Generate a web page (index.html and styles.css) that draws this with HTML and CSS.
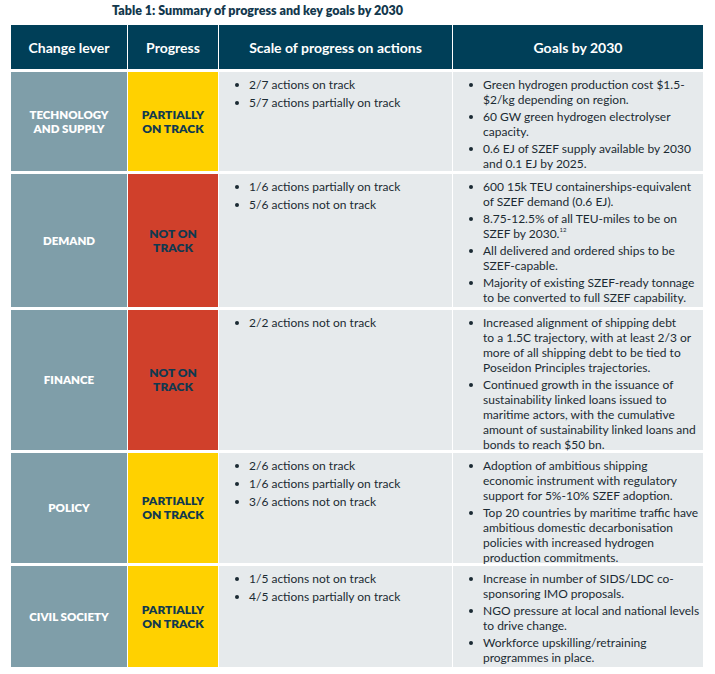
FILE: index.html
```html
<!DOCTYPE html>
<html lang="en">
<head>
<meta charset="utf-8">
<title>Table 1: Summary of progress and key goals by 2030</title>
<link rel="stylesheet" href="styles.css">
</head>
<body>
<div class="page">
  <h1 class="title">Table 1: Summary of progress and key goals by 2030</h1>
  <div class="table">
    <div class="th">Change lever</div>
    <div class="th">Progress</div>
    <div class="th">Scale of progress on actions</div>
    <div class="th">Goals by 2030</div>

    <div class="lever">TECHNOLOGY<br>AND SUPPLY</div>
    <div class="status partial">PARTIALLY<br>ON TRACK</div>
    <div class="cell"><ul class="list actions"><li>2/7 actions on track</li><li>5/7 actions partially on track</li></ul></div>
    <div class="cell"><ul class="list goals"><li>Green hydrogen production cost $1.5-<br>$2/kg depending on region.</li><li>60 GW green hydrogen electrolyser<br>capacity.</li><li>0.6 EJ of SZEF supply available by 2030<br>and 0.1 EJ by 2025.</li></ul></div>

    <div class="lever">DEMAND</div>
    <div class="status notrack">NOT ON<br>TRACK</div>
    <div class="cell"><ul class="list actions"><li>1/6 actions partially on track</li><li>5/6 actions not on track</li></ul></div>
    <div class="cell"><ul class="list goals"><li>600 15k TEU containerships-equivalent<br>of SZEF demand (0.6 EJ).</li><li>8.75-12.5% of all TEU-miles to be on<br>SZEF by 2030.<sup>12</sup></li><li>All delivered and ordered ships to be<br>SZEF-capable.</li><li>Majority of existing SZEF-ready tonnage<br>to be converted to full SZEF capability.</li></ul></div>

    <div class="lever">FINANCE</div>
    <div class="status notrack">NOT ON<br>TRACK</div>
    <div class="cell"><ul class="list actions"><li>2/2 actions not on track</li></ul></div>
    <div class="cell"><ul class="list goals"><li>Increased alignment of shipping debt<br>to a 1.5C trajectory, with at least 2/3 or<br>more of all shipping debt to be tied to<br>Poseidon Principles trajectories.</li><li>Continued growth in the issuance of<br>sustainability linked loans issued to<br>maritime actors, with the cumulative<br>amount of sustainability linked loans and<br>bonds to reach $50 bn.</li></ul></div>

    <div class="lever">POLICY</div>
    <div class="status partial">PARTIALLY<br>ON TRACK</div>
    <div class="cell"><ul class="list actions"><li>2/6 actions on track</li><li>1/6 actions partially on track</li><li>3/6 actions not on track</li></ul></div>
    <div class="cell"><ul class="list goals"><li>Adoption of ambitious shipping<br>economic instrument with regulatory<br>support for 5%-10% SZEF adoption.</li><li>Top 20 countries by maritime traffic have<br>ambitious domestic decarbonisation<br>policies with increased hydrogen<br>production commitments.</li></ul></div>

    <div class="lever">CIVIL SOCIETY</div>
    <div class="status partial">PARTIALLY<br>ON TRACK</div>
    <div class="cell"><ul class="list actions"><li>1/5 actions not on track</li><li>4/5 actions partially on track</li></ul></div>
    <div class="cell"><ul class="list goals"><li>Increase in number of SIDS/LDC co-<br>sponsoring IMO proposals.</li><li>NGO pressure at local and national levels<br>to drive change.</li><li>Workforce upskilling/retraining<br>programmes in place.</li></ul></div>
  </div>
</div>
</body>
</html>
```

FILE: styles.css
```css
html, body {
  margin: 0;
  padding: 0;
  background: #ffffff;
}

body {
  font-family: "Lato", "Open Sans", "Liberation Sans", sans-serif;
  color: #1b2a33;
}

.page {
  padding: 3px 12px 0 11px;
}

.title {
  margin: 0 0 7px 101px;
  font-size: 12.5px;
  line-height: 15px;
  font-weight: 800;
  color: #13384d;
}

.table {
  display: grid;
  grid-template-columns: 116px 90px 233px 250px;
  grid-template-rows: 44px 99px 133px 140px 110px 101px;
  column-gap: 1px;
  row-gap: 3px;
  width: 692px;
}

.th {
  background: #003f58;
  color: #ffffff;
  font-size: 14px;
  font-weight: 700;
  display: flex;
  align-items: center;
  justify-content: center;
  text-align: center;
}

.lever {
  background: #7f9ea9;
  color: #ffffff;
  font-size: 11.5px;
  font-weight: 800;
  line-height: 14px;
  display: flex;
  align-items: center;
  justify-content: center;
  text-align: center;
}

.status {
  color: #10394f;
  font-size: 12px;
  font-weight: 800;
  line-height: 14px;
  display: flex;
  align-items: center;
  justify-content: center;
  text-align: center;
}

.partial { background: #ffd100; }
.notrack { background: #d0402b; }

.cell {
  background: #e6eaec;
  padding: 5px 2px 0 16px;
  font-size: 12px;
  line-height: 15px;
  white-space: nowrap;
}

.list {
  margin: 0;
  padding: 0;
  list-style: none;
}

.list li {
  position: relative;
  padding-left: 14px;
}

.list li::before {
  content: "";
  position: absolute;
  left: 0;
  top: 6px;
  width: 4px;
  height: 4px;
  border-radius: 50%;
  background: #1b2a33;
}

.actions li { margin-bottom: 3px; }
.goals li { margin-bottom: 2px; }

.list sup {
  font-size: 6px;
  line-height: 6px;
  vertical-align: top;
  position: relative;
  top: 1px;
}
```
